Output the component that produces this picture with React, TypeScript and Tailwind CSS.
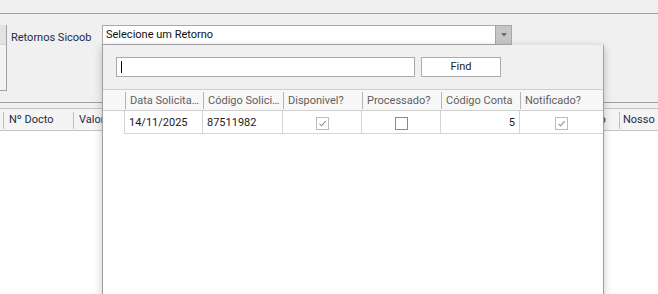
import React from "react";

const font = { fontFamily: "Roboto, 'Liberation Sans', sans-serif" };

function Check({ checked }: { checked: boolean }) {
  return (
    <div
      className={
        "w-[13px] h-[13px] bg-white border flex items-center justify-center " +
        (checked ? "border-[#bcbcbc]" : "border-[#8a8a8a]")
      }
    >
      {checked && (
        <svg width="9" height="9" viewBox="0 0 9 9">
          <path d="M1.5 4.8 L3.6 6.8 L7.6 2.2" fill="none" stroke="#8c8c8c" strokeWidth="1.1" />
        </svg>
      )}
    </div>
  );
}

const cols = [
  { w: "w-[78px]", label: "Data Solicitação" },
  { w: "w-[80px]", label: "Código Solicitação" },
  { w: "w-[79px]", label: "Disponivel?" },
  { w: "w-[79px]", label: "Processado?" },
  { w: "w-[79px]", label: "Código Conta" },
  { w: "flex-1", label: "Notificado?" },
];

function Popup() {
  return (
    <div className="absolute left-[102px] top-[45px] w-[502px] h-[260px] bg-white border-x border-b border-[#a0a0a0] shadow-[0_2px_8px_rgba(0,0,0,0.22)] flex flex-col">
      {/* search bar */}
      <div className="h-[44px] bg-[#f0f0f0] flex items-start pt-[12px] pl-[13px] gap-[6px]">
        <div className="w-[299px] h-[20px] bg-white border border-[#a9a9a9] flex items-center pl-[4px]">
          <div className="w-px h-[12px] bg-black" />
        </div>
        <button className="w-[80px] h-[20px] bg-white border border-[#adadad] text-[11px] text-[#222] flex items-center justify-center">
          Find
        </button>
      </div>
      {/* grid header */}
      <div className="h-[22px] flex border-t border-b border-[#cfcfcf] bg-[#f7f7f7]">
        <div className="w-[22px] shrink-0" />
        {cols.map((c, i) => (
          <div key={i} className={c.w + " shrink-0 flex items-center min-w-0 overflow-hidden"}>
            <div className="w-px h-[17px] bg-[#b4b4b4] shrink-0" />
            <span className="pl-[4px] pr-[2px] pt-[2px] text-[11px] text-[#5f5f5f] truncate">{c.label}</span>
          </div>
        ))}
      </div>
      {/* data row */}
      <div className="h-[23px] flex text-[11px] text-[#1a1a1a]">
        <div className="w-[22px] shrink-0 border-r border-[#d4d4d4]" />
        <div className="w-[78px] shrink-0 border-r border-b border-[#d4d4d4] flex items-center pl-[4px] pt-[2px]">14/11/2025</div>
        <div className="w-[80px] shrink-0 border-r border-b border-[#d4d4d4] flex items-center pl-[4px] pt-[2px]">87511982</div>
        <div className="w-[79px] shrink-0 border-r border-b border-[#d4d4d4] flex items-center justify-center pt-[2px]">
          <Check checked />
        </div>
        <div className="w-[79px] shrink-0 border-r border-b border-[#d4d4d4] flex items-center justify-center pt-[2px]">
          <Check checked={false} />
        </div>
        <div className="w-[79px] shrink-0 border-r border-b border-[#d4d4d4] flex items-center justify-end pr-[4px] pt-[2px]">5</div>
        <div className="flex-1 border-b border-[#d4d4d4] flex items-center justify-center pr-[1px] pt-[2px]">
          <Check checked />
        </div>
      </div>
      <div className="flex-1 bg-white" />
    </div>
  );
}

export default function App() {
  return (
    <div className="w-[658px] h-[294px] bg-[#f0f0f0] relative overflow-hidden" style={font}>
      <div className="h-[14px] border-b border-[#a0a0a0]" />
      {/* filter row */}
      <div className="h-[88px] flex items-start">
        <div className="mt-[11px] w-[7px] h-[66px] border-r border-b border-[#a0a0a0] bg-[#f3f3f3] flex flex-col">
          <div className="h-[20px] bg-[#e3e3e3] border-b border-[#d6d6d6]" />
        </div>
        <span className="mt-[14px] ml-[4px] w-[91px] text-[11px] text-[#1e2b45] leading-[20px]">Retornos Sicoob</span>
        <div className="mt-[11px] w-[410px] h-[20px] bg-white border border-[#a9a9a9] flex">
          <span className="flex-1 pl-[3px] text-[11px] text-[#111] leading-[18px]">Selecione um Retorno</span>
          <div className="w-[16px] h-full bg-[#c6c6c6] border-l border-[#a6a6a6] flex items-center justify-center">
            <svg width="6" height="4" viewBox="0 0 6 4">
              <path d="M0 0 L6 0 L3 3.5 Z" fill="#6a6a6a" />
            </svg>
          </div>
        </div>
      </div>
      {/* main grid */}
      <div className="border-t border-[#a0a0a0]">
        <div className="h-[5px]" />
        <div className="h-[23px] border-t border-b border-[#c4c4c4] flex items-center text-[11px] text-[#1e2b45] bg-[#f4f4f4] pt-[1px]">
          <div className="w-[3px]" />
          <div className="w-[70px] flex items-center">
            <div className="w-px h-[17px] bg-[#c8bfa8]" />
            <span className="pl-[5px]">Nº Docto</span>
          </div>
          <div className="w-[452px] flex items-center">
            <div className="w-px h-[17px] bg-[#c8bfa8]" />
            <span className="pl-[5px]">Valor Título</span>
          </div>
          <div className="w-[94px] flex items-center">
            <div className="w-px h-[17px] bg-[#c8bfa8]" />
            <span className="pl-[5px]">Dt. Vencimento</span>
          </div>
          <div className="flex-1 flex items-center whitespace-nowrap overflow-hidden">
            <div className="w-px h-[17px] bg-[#c8bfa8] shrink-0" />
            <span className="pl-[3px]">Nosso Número</span>
          </div>
        </div>
        <div className="h-[200px] bg-white" />
      </div>
      <Popup />
    </div>
  );
}
